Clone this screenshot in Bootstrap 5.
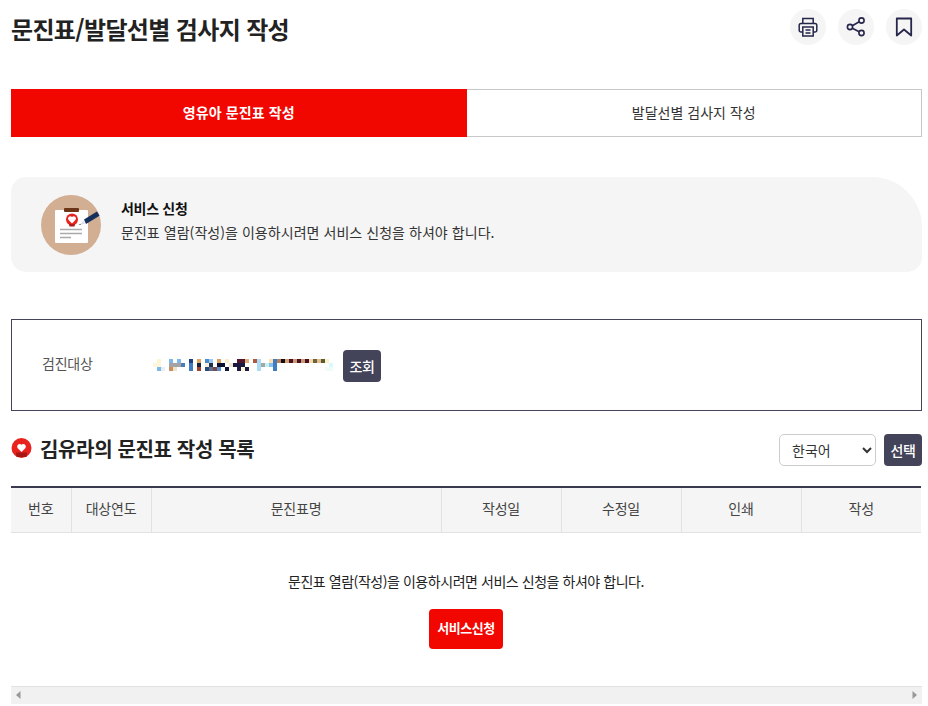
<!DOCTYPE html>
<html lang="ko"><head><meta charset="utf-8">
<link href="https://cdn.jsdelivr.net/npm/bootstrap@5.3.0/dist/css/bootstrap.min.css" rel="stylesheet">
<style>
body{font-family:"Noto Sans CJK KR","Noto Sans",sans-serif;color:#222;font-size:14px;background:#fff;overflow:hidden}
.pg{width:911px;margin-left:11px;height:706px}
.head-row{height:60px}
.pg-title{font-size:24px;font-weight:700;color:#222;margin:0;line-height:36px;letter-spacing:-.65px;padding-bottom:3px}
.ic-set{gap:12px;margin-bottom:6px}
.round-ic{width:36px;height:36px;border-radius:50%;background:#f5f5f5;border:0;padding:0}
.tab-row{margin-top:29px;height:48px}
.tab-on,.tab-off{width:50%;font-size:14px;text-decoration:none;padding-bottom:2px}
.tab-on{background:#f20600;color:#fff;font-weight:700;letter-spacing:.1px}
.tab-off{border:1px solid #c8c8c8;border-left:0;color:#333}
.svc-box{margin-top:40px;height:95px;background:#f5f5f5;border-radius:15px 50px 15px 15px;padding-left:30px;gap:20px}
.svc-txt{padding-bottom:10px}
.svc-t{font-size:14px;font-weight:700;line-height:24px;color:#111;letter-spacing:-.3px}
.svc-d{font-size:14px;line-height:24px;color:#333;letter-spacing:.05px}
.look-box{margin-top:47px;height:92px;border:1px solid #45455a;padding-left:30px}
.look-lb{width:109px;color:#555;letter-spacing:-.2px;padding-bottom:3px}
.look-btn{margin-left:9px;margin-top:2px}
.dk-btn{background:#43435a;color:#fff;border:0;border-radius:4px;width:38px;height:32px;padding:0;font-size:14px;font-weight:500;letter-spacing:-.3px}
.list-head{margin-top:22px;height:34px}
.list-title{font-size:20px;font-weight:700;margin:0;color:#222;letter-spacing:-.35px;padding-bottom:3px}
.hrt{margin-bottom:4px}
.lang{width:97px;height:32px;font-size:14px;padding:0 0 0 8px;border-color:#ccc;border-radius:5px;color:#333;background-image:none;appearance:auto;-webkit-appearance:auto;font-family:inherit}
.tbl-wrap{margin-top:19px}
.q-tbl{table-layout:fixed;width:910px;margin:0;border-top:2px solid #3a3a4e}
.q-tbl th{height:45px;padding:0 0 2px;background:#f5f5f5;font-weight:400;text-align:center;vertical-align:middle;border:0;border-bottom:1px solid #e2e2e2;border-left:1px solid #e2e2e2;color:#444;font-size:14px;letter-spacing:-.2px}
.q-tbl th:first-child{border-left:0}
.q-note{margin-top:36px;width:910px;text-align:center;line-height:24px;color:#222;letter-spacing:-.45px}
.red-btn{display:block;margin:16px 0 0 418px;width:74px;height:40px;background:#f20600;color:#fff;border:0;border-radius:4px;font-weight:700;font-size:13px;padding:0 0 1px;letter-spacing:-.5px}
.hbar{margin-top:37px;height:18px;background:#f1f1f1;border-top:1px solid #e2e2e2;padding:0 5px}
.blob{display:block}
</style></head><body>
<div class="pg">
 <div class="head-row d-flex justify-content-between align-items-center">
  <h1 class="pg-title">문진표/발달선별 검사지 작성</h1>
  <div class="d-flex ic-set">
   <button class="round-ic d-flex align-items-center justify-content-center" aria-label="인쇄"><svg width="20" height="20" viewBox="0 0 20 20" fill="none" stroke="#26264a" stroke-width="1.5"><path d="M4.800 6.500V1.500h10.400v5"/><path d="M4.500 15H3a1.800 1.800 0 0 1-1.800-1.800V8.300A1.800 1.800 0 0 1 3 6.500h14a1.800 1.800 0 0 1 1.800 1.800v4.900A1.800 1.800 0 0 1 17 15h-1.500"/><rect x="4.800" y="10" width="10.400" height="9"/><path d="M7.500 13h5M7.500 16h5"/></svg></button>
   <button class="round-ic d-flex align-items-center justify-content-center" aria-label="공유"><svg width="20" height="20" viewBox="0 0 20 20" fill="none" stroke="#26264a" stroke-width="1.6"><circle cx="15.500" cy="3.500" r="2.600"/><circle cx="4" cy="10" r="2.600"/><circle cx="15.500" cy="16" r="2.600"/><path d="M6.300 8.700l6.900-3.900M6.300 11.300l6.900 3.400"/></svg></button>
   <button class="round-ic d-flex align-items-center justify-content-center" aria-label="북마크"><svg width="20" height="20" viewBox="0 0 20 20" fill="none" stroke="#26264a" stroke-width="1.8" stroke-linejoin="round"><path d="M2.800 1.500h14.400v17L10 12.500 2.800 18.500z"/></svg></button>
  </div>
 </div>
 <div class="tab-row d-flex">
  <a class="tab-on d-flex align-items-center justify-content-center" href="#">영유아 문진표 작성</a>
  <a class="tab-off d-flex align-items-center justify-content-center" href="#">발달선별 검사지 작성</a>
 </div>
 <div class="svc-box d-flex align-items-center">
  <svg width="60" height="60" viewBox="0 0 60 60"><circle cx="30" cy="30" r="30" fill="#d2ae93"/><rect x="14" y="15" width="33" height="33" rx="1" fill="#fff"/><rect x="23" y="13" width="15" height="4" rx="1" fill="#6d3518"/><circle cx="31" cy="24.500" r="6" fill="#e8231f"/><path d="M31 28.500l-3.400-3.500a2.200 2.200 0 0 1 3.400-2.900 2.200 2.200 0 0 1 3.400 2.900z" fill="#fff"/><path d="M28 29h6l-.5 2.500h-5z" fill="#b01a18"/><path d="M19 34.500h22M19 38.500h22M19 42.500h11" stroke="#aaa" stroke-width="1.300"/><path d="M43 24.500L56 16.500l2.500 4.200L45 29z" fill="#14305c"/><path d="M42.500 25.500l1.500 3-5 1.500z" fill="#dde"/><path d="M37.500 29.500l2-.8.300 1.300z" fill="#556"/></svg>
  <div class="svc-txt"><div class="svc-t">서비스 신청</div><div class="svc-d">문진표 열람(작성)을 이용하시려면 서비스 신청을 하셔야 합니다.</div></div>
 </div>
 <div class="look-box d-flex align-items-center">
  <span class="look-lb">검진대상</span>
  <svg class="blob" width="183" height="12" viewBox="0 0 549 36" shape-rendering="crispEdges">
   <g>
    <rect x="18" y="0" width="12" height="12" fill="#fdf4d2"/><rect x="54" y="0" width="12" height="12" fill="#7db9e8"/><rect x="78" y="0" width="12" height="12" fill="#7db9e8"/><rect x="114" y="0" width="12" height="12" fill="#1e3f80"/><rect x="138" y="0" width="12" height="12" fill="#e0a860"/><rect x="162" y="0" width="12" height="12" fill="#4a8ccc"/><rect x="174" y="0" width="12" height="12" fill="#9ccbef"/><rect x="198" y="0" width="12" height="12" fill="#d8a060"/><rect x="222" y="0" width="12" height="12" fill="#fbeec8"/><rect x="258" y="0" width="12" height="12" fill="#52152e"/>
    <rect x="6" y="12" width="24" height="12" fill="#fdf6dc"/><rect x="54" y="12" width="36" height="12" fill="#a4a4a4"/><rect x="90" y="12" width="12" height="12" fill="#4a7cb8"/><rect x="114" y="12" width="12" height="12" fill="#3f7cc0"/><rect x="138" y="12" width="12" height="12" fill="#14233f"/><rect x="162" y="12" width="12" height="12" fill="#f6efe0"/><rect x="174" y="12" width="12" height="12" fill="#20304f"/><rect x="198" y="12" width="24" height="12" fill="#0c1030"/><rect x="234" y="12" width="12" height="12" fill="#f4e8d0"/><rect x="246" y="12" width="24" height="12" fill="#1a1a40"/>
    <rect x="18" y="24" width="12" height="12" fill="#7db9e8"/><rect x="30" y="24" width="12" height="12" fill="#e8eef4"/><rect x="54" y="24" width="12" height="12" fill="#c98f5c"/><rect x="66" y="24" width="12" height="12" fill="#f0e4d0"/><rect x="114" y="24" width="12" height="12" fill="#3f7cc0"/><rect x="138" y="24" width="12" height="12" fill="#a04030"/><rect x="162" y="24" width="12" height="12" fill="#2a4c7c"/><rect x="174" y="24" width="12" height="12" fill="#60708c"/><rect x="186" y="24" width="12" height="12" fill="#7a4a48"/><rect x="198" y="24" width="12" height="12" fill="#5c90c8"/><rect x="222" y="24" width="12" height="12" fill="#141438"/><rect x="258" y="24" width="12" height="12" fill="#201a40"/>
   </g>
   <g transform="translate(270 0)">
    <rect x="0" y="0" width="12" height="12" fill="#52152e"/><rect x="12" y="0" width="12" height="12" fill="#e4b078"/><rect x="36" y="0" width="12" height="12" fill="#b0583c"/><rect x="48" y="0" width="12" height="36" fill="#aadcf8"/><rect x="84" y="0" width="12" height="12" fill="#fbe0b0"/><rect x="96" y="0" width="12" height="36" fill="#3f7cc0"/><rect x="108" y="0" width="12" height="12" fill="#b8805c"/><rect x="120" y="0" width="12" height="12" fill="#120c10"/><rect x="132" y="0" width="12" height="12" fill="#d0a078"/><rect x="144" y="0" width="12" height="12" fill="#4a0f20"/><rect x="156" y="0" width="12" height="12" fill="#c89878"/><rect x="168" y="0" width="12" height="12" fill="#4a0f20"/><rect x="180" y="0" width="12" height="12" fill="#c89878"/><rect x="192" y="0" width="12" height="12" fill="#4a0f20"/><rect x="204" y="0" width="12" height="12" fill="#f4d8a8"/><rect x="216" y="0" width="12" height="12" fill="#6c6440"/><rect x="228" y="0" width="12" height="12" fill="#e0c088"/><rect x="240" y="0" width="12" height="12" fill="#5c5838"/><rect x="252" y="0" width="12" height="12" fill="#fbf4c8"/>
    <rect x="0" y="12" width="12" height="12" fill="#1a1a40"/><rect x="60" y="12" width="12" height="12" fill="#a0a8a8"/><rect x="72" y="12" width="12" height="12" fill="#c8f0f0"/><rect x="84" y="12" width="12" height="12" fill="#88c0f0"/><rect x="264" y="12" width="12" height="12" fill="#d8fafc"/>
    <rect x="0" y="24" width="12" height="12" fill="#fdf4d8"/><rect x="12" y="24" width="12" height="12" fill="#201a40"/><rect x="252" y="24" width="12" height="12" fill="#f4fbf4"/><rect x="264" y="24" width="12" height="12" fill="#ecfcfc"/>
   </g>
  </svg>
  <button class="dk-btn look-btn">조회</button>
 </div>
 <div class="list-head d-flex justify-content-between align-items-center">
  <div class="d-flex align-items-center gap-2">
   <svg class="hrt" width="21" height="21" viewBox="0 0 21 21"><circle cx="10.500" cy="10" r="10" fill="#e8231f"/><path d="M5 14.500h11l-.5 4.500h-10z" fill="#a81614"/><path d="M10.500 14l-4-4.100a2.600 2.600 0 0 1 4-3.200 2.600 2.600 0 0 1 4 3.200z" fill="#fff"/></svg>
   <h2 class="list-title">김유라의 문진표 작성 목록</h2>
  </div>
  <div class="d-flex gap-2 align-items-center">
   <select class="form-select lang"><option>한국어</option></select>
   <button class="dk-btn">선택</button>
  </div>
 </div>
 <div class="tbl-wrap">
  <table class="table q-tbl">
   <colgroup><col width="60"><col width="80"><col width="290"><col width="120"><col width="120"><col width="120"><col width="120"></colgroup>
   <thead><tr><th>번호</th><th>대상연도</th><th>문진표명</th><th>작성일</th><th>수정일</th><th>인쇄</th><th>작성</th></tr></thead>
  </table>
  <div class="q-note">문진표 열람(작성)을 이용하시려면 서비스 신청을 하셔야 합니다.</div>
  <button class="red-btn">서비스신청</button>
  <div class="hbar d-flex justify-content-between align-items-center">
   <svg width="5" height="8" viewBox="0 0 5 8"><path d="M4.500 0v8L0 4z" fill="#999"/></svg>
   <svg width="5" height="8" viewBox="0 0 5 8"><path d="M.5 0v8L5 4z" fill="#999"/></svg>
  </div>
 </div>
</div>
<script src="https://cdn.jsdelivr.net/npm/bootstrap@5.3.0/dist/js/bootstrap.bundle.min.js"></script>
</body></html>
